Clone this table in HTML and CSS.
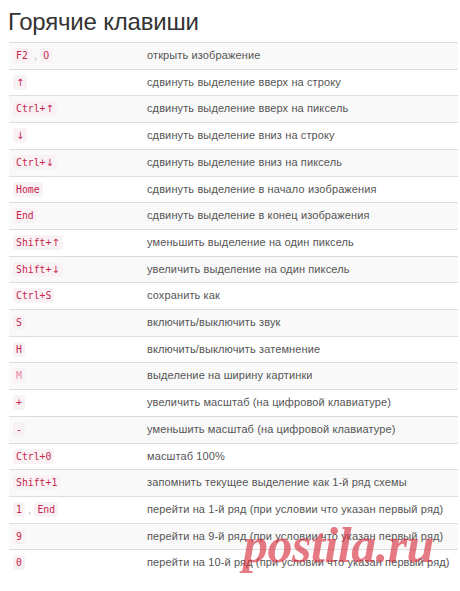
FILE: index.html
```html
<!DOCTYPE html>
<html lang="ru">
<head>
<meta charset="utf-8">
<link rel="stylesheet" href="styles.css">
</head>
<body>
<div class="page">
  <h2 class="title">Горячие клавиши</h2>
  <table class="keys">
    <tbody>
      <tr><td><code>F2</code> , <code>O</code></td><td>открыть изображение</td></tr>
      <tr><td><code><span class="arr">↑</span></code></td><td>сдвинуть выделение вверх на строку</td></tr>
      <tr><td><code>Ctrl+<span class="arr">↑</span></code></td><td>сдвинуть выделение вверх на пиксель</td></tr>
      <tr><td><code><span class="arr">↓</span></code></td><td>сдвинуть выделение вниз на строку</td></tr>
      <tr><td><code>Ctrl+<span class="arr">↓</span></code></td><td>сдвинуть выделение вниз на пиксель</td></tr>
      <tr><td><code>Home</code></td><td>сдвинуть выделение в начало изображения</td></tr>
      <tr><td><code>End</code></td><td>сдвинуть выделение в конец изображения</td></tr>
      <tr><td><code>Shift+<span class="arr">↑</span></code></td><td>уменьшить выделение на один пиксель</td></tr>
      <tr><td><code>Shift+<span class="arr">↓</span></code></td><td>увеличить выделение на один пиксель</td></tr>
      <tr><td><code>Ctrl+S</code></td><td>сохранить как</td></tr>
      <tr><td><code>S</code></td><td>включить/выключить звук</td></tr>
      <tr><td><code>H</code></td><td>включить/выключить затемнение</td></tr>
      <tr><td><code class="faded">M</code></td><td>выделение на ширину картинки</td></tr>
      <tr><td><code>+</code></td><td>увеличить масштаб (на цифровой клавиатуре)</td></tr>
      <tr><td><code>-</code></td><td>уменьшить масштаб (на цифровой клавиатуре)</td></tr>
      <tr><td><code>Ctrl+0</code></td><td>масштаб 100%</td></tr>
      <tr><td><code>Shift+1</code></td><td>запомнить текущее выделение как 1-й ряд схемы</td></tr>
      <tr><td><code>1</code> , <code>End</code></td><td>перейти на 1-й ряд (при условии что указан первый ряд)</td></tr>
      <tr><td><code>9</code></td><td>перейти на 9-й ряд (при условии что указан первый ряд)</td></tr>
      <tr><td><code>0</code></td><td>перейти на 10-й ряд (при условии что указан первый ряд)</td></tr>
    </tbody>
  </table>
  <div class="watermark">postila.ru</div>
</div>
</body>
</html>
```
FILE: styles.css
```css
html, body {
  margin: 0;
  padding: 0;
  background: #fff;
}
.page {
  position: relative;
  width: 460px;
  height: 591px;
  overflow: hidden;
  font-family: "Liberation Sans", Arial, sans-serif;
  color: #555;
}
.title {
  margin: 0;
  padding: 7px 0 0 8px;
  height: 42px;
  box-sizing: border-box;
  font-weight: normal;
  font-size: 24px;
  line-height: 30px;
  color: #333;
  letter-spacing: -0.2px;
}
.keys {
  margin-left: 9px;
  width: 449px;
  border-collapse: collapse;
  font-size: 11px;
  line-height: 15.71px;
  letter-spacing: 0.12px;
}
.keys td {
  padding: 5px 4px;
  border-top: 1px solid #ddd;
  vertical-align: top;
  white-space: nowrap;
}
.keys td:first-child {
  width: 126px;
  color: #aaa;
}
.keys tr:nth-child(odd) td {
  background: #f9f9f9;
}
code {
  font-family: "DejaVu Sans Mono", "Liberation Mono", monospace;
  font-size: 9.8px;
  padding: 2px 3px;
  color: #c7254e;
  background: #f9f2f4;
  border-radius: 3px;
  letter-spacing: 0;
}
.arr {
  font-family: "DejaVu Sans", sans-serif;
  font-size: 10px;
}
code.faded {
  color: #e58aa4;
}
.watermark {
  position: absolute;
  left: 243px;
  top: 520px;
  font-family: "Liberation Serif", "Times New Roman", serif;
  font-weight: bold;
  font-style: italic;
  font-size: 50px;
  line-height: 50px;
  color: rgba(214, 40, 56, 0.62);
  letter-spacing: -0.5px;
}
```
